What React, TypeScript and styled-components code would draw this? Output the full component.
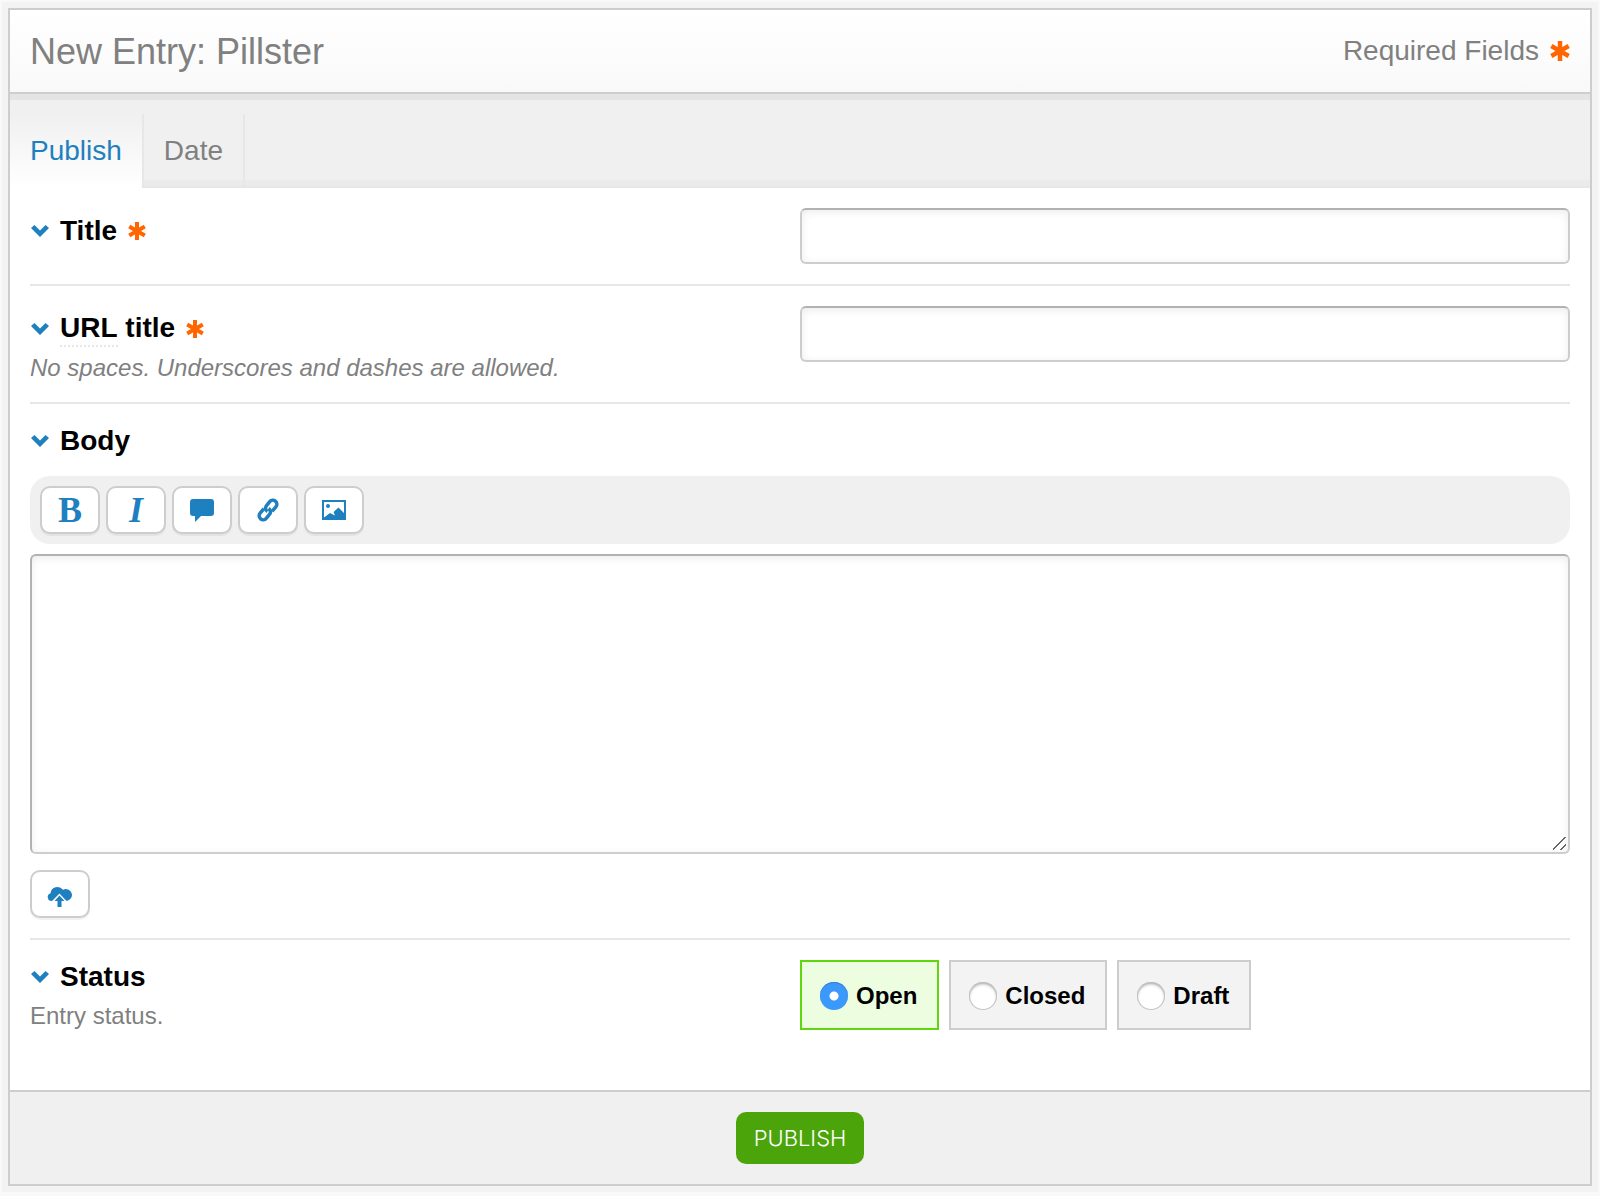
import React, { useId, useState } from "react";
import styled, { createGlobalStyle } from "styled-components";

const BLUE = "#1f80bf";
const ORANGE = "#ff6600";

const GlobalStyle = createGlobalStyle`
  *, *::before, *::after { box-sizing: border-box; }
  body {
    margin: 0;
    background: #f9f9f9;
    color: #000;
    font-family: "Liberation Sans", Arial, Helvetica, sans-serif;
    font-size: 28px;
    line-height: 34px;
  }
`;

const Panel = styled.form`
  margin: 8px 8px 10px;
  border: 2px solid #cdcdcd;
  background: #fff;
  box-shadow: 0 0 0 6px #f3f3f3;
`;

const Header = styled.header`
  display: flex;
  align-items: center;
  justify-content: space-between;
  height: 84px;
  padding: 0 20px;
  border-bottom: 2px solid #cdcdcd;
  background: linear-gradient(to bottom, #fff, #f9f9f9);
  color: #808080;
`;

const Heading = styled.h1`
  margin: 0;
  padding-top: 2px;
  font-size: 36px;
  line-height: 44px;
  font-weight: 400;
`;

const RequiredNote = styled.p`
  display: flex;
  align-items: center;
  gap: 11px;
  margin: 0;
`;

const TabBar = styled.div`
  display: flex;
  padding-top: 14px;
  border-top: 6px solid #e4e4e4;
  background: linear-gradient(#f0f0f0, #f0f0f0) top / 100% calc(100% - 8px) no-repeat,
    linear-gradient(#e7e7e7, #e7e7e7) bottom / 100% 2px no-repeat, #ebebeb;
  background-clip: padding-box;
`;

const Tab = styled.button<{ $active: boolean }>`
  height: 74px;
  padding: 0 20px;
  border: 0;
  border-right: 2px solid #e7e7e7;
  background: ${(p) => (p.$active ? "linear-gradient(to bottom, #f0f0f0, #fff)" : "transparent")};
  color: ${(p) => (p.$active ? BLUE : "#808080")};
  font: inherit;
  cursor: pointer;
`;

const Fields = styled.div`
  padding: 0 20px 40px;
`;

const Row = styled.section`
  padding: 20px 0;
  border-bottom: 2px solid #e7e7e7;
  &:last-child { border-bottom: 0; }
`;

const SplitRow = styled(Row)`
  display: grid;
  grid-template-columns: 1fr 1fr;
  align-items: start;
`;

const FieldName = styled.div<{ $required?: boolean }>`
  display: flex;
  align-items: center;
  height: 34px;
  margin-top: ${(p) => (p.$required ? 6 : 0)}px;
  font-weight: 700;
`;

const Toggle = styled.button`
  display: flex;
  flex: none;
  width: 30px;
  padding: 0 0 0 1px;
  border: 0;
  background: none;
  cursor: pointer;
`;

const NameLabel = styled.label`
  margin-right: 11px;
`;

const Abbr = styled.abbr`
  display: inline-block;
  border-bottom: 2px dotted #e7e7e7;
  text-decoration: none;
`;

const Hint = styled.p<{ $italic?: boolean }>`
  margin: 8px 0 0;
  color: #808080;
  font-size: 24px;
  line-height: 28px;
  font-style: ${(p) => (p.$italic ? "italic" : "normal")};
`;

const fieldBox = `
  display: block;
  width: 100%;
  border: 2px solid #cdcdcd;
  border-top-color: #b2b2b2;
  border-radius: 6px;
  background: #fff;
  box-shadow: inset 0 2px 8px rgba(0, 0, 0, 0.08);
  font: inherit;
  outline: 0;
`;

const TextInput = styled.input`
  ${fieldBox}
  height: 56px;
  padding: 0 10px;
`;

const TextArea = styled.textarea`
  ${fieldBox}
  height: 300px;
  margin: 10px 0 16px;
  padding: 10px;
  border-left-color: #b2b2b2;
  resize: vertical;
  &::-webkit-resizer {
    background: linear-gradient(135deg, transparent 44%, #666 45%, #666 52%, transparent 53%, transparent 74%, #666 75%, #666 82%, transparent 83%) 0 0 / 13px 13px no-repeat;
  }
`;

const Toolbar = styled.div`
  display: flex;
  gap: 6px;
  margin-top: 18px;
  padding: 10px;
  border-radius: 20px;
  background: #f0f0f0;
`;

const ToolButton = styled.button`
  display: flex;
  align-items: center;
  justify-content: center;
  width: 60px;
  height: 48px;
  padding: 0;
  border: 2px solid #cdcdcd;
  border-radius: 10px;
  background: #fff;
  box-shadow: 0 2px 0 rgba(0, 0, 0, 0.05);
  color: ${BLUE};
  cursor: pointer;
`;

const Letter = styled.span<{ $italic?: boolean }>`
  font-family: "Liberation Serif", "Times New Roman", serif;
  font-size: 36px;
  line-height: 40px;
  font-weight: 700;
  font-style: ${(p) => (p.$italic ? "italic" : "normal")};
`;

const Choices = styled.div`
  display: flex;
  gap: 10px;
`;

const Choice = styled.label<{ $checked: boolean }>`
  display: flex;
  align-items: center;
  gap: 8px;
  height: 70px;
  padding: 2px 20px 0 18px;
  border: 2px solid ${(p) => (p.$checked ? "#5fd60e" : "#cdcdcd")};
  background: ${(p) => (p.$checked ? "#ecfde0" : "#f3f3f3")};
  font-size: 24px;
  font-weight: 700;
  cursor: pointer;
`;

const Radio = styled.input`
  appearance: none;
  width: 28px;
  height: 28px;
  margin: 0;
  border-radius: 50%;
  background: #fff;
  box-shadow: inset 0 0 0 1px #c4c4c4, inset 0 2px 3px rgba(0, 0, 0, 0.35);
  &:checked {
    background: radial-gradient(circle, #fff 0 4px, #3b99fc 5px);
    box-shadow: inset 0 1px 1px #2f7fd6;
  }
`;

const Footer = styled.footer`
  display: flex;
  justify-content: center;
  padding: 20px;
  border-top: 2px solid #cdcdcd;
  background: #f0f0f0;
`;

const Submit = styled.button`
  height: 52px;
  padding: 0 18px;
  border: 0;
  border-radius: 10px;
  background: #4ba50a;
  color: #fff;
  font-family: Inter, Roboto, sans-serif;
  font-size: 22px;
  font-weight: 300;
  cursor: pointer;
`;

const Asterisk = ({ size = 18 }: { size?: number }) => (
  <svg width={size} height={size} viewBox="0 0 18 18" aria-label="required">
    <path d="M9 0v18M1.2 4.5l15.6 9M16.8 4.5l-15.6 9" stroke={ORANGE} strokeWidth="4" />
  </svg>
);

const Chevron = () => (
  <svg width="18" height="12" viewBox="0 0 18 12" aria-hidden="true">
    <path d="M3.500 0L9 5.500 14.500 0 18 3 9 12 0 3z" fill={BLUE} />
  </svg>
);

const QuoteIcon = () => (
  <svg width="24" height="23" viewBox="0 0 24 23" fill="currentColor" aria-hidden="true">
    <path d="M3 0h18a3 3 0 0 1 3 3v11a3 3 0 0 1-3 3H11l-6 6v-6H3a3 3 0 0 1-3-3V3a3 3 0 0 1 3-3z" />
  </svg>
);

const LinkIcon = () => (
  <svg width="24" height="24" viewBox="-12 -12 24 24" fill="none" stroke="currentColor" strokeWidth="3.500" aria-hidden="true">
    <g transform="rotate(-50)">
      <path d="M-1.500 -4H-7.500a4 4 0 0 0 0 8h5a4 4 0 0 0 4 -4.500" />
      <path d="M1.500 4H7.500a4 4 0 0 0 0 -8h-5a4 4 0 0 0 -4 4.500" />
    </g>
  </svg>
);

const ImageIcon = () => (
  <svg width="24" height="20" viewBox="0 0 24 20" fill="currentColor" aria-hidden="true">
    <path fillRule="evenodd" d="M0 0h24v20H0zM2 2v15.500l6-4.500 5 2.500-1.500-3.500 5-4.500 5.500 5.500V2z" />
    <circle cx="6" cy="6" r="2" />
  </svg>
);

const UploadIcon = () => (
  <svg width="26" height="26" viewBox="0 0 26 26" fill="currentColor" aria-hidden="true">
    <path d="M5 20a4 4 0 0 1-1.500-7.800A7 7 0 0 1 16 8.800 6 6 0 1 1 19.500 20L12.500 12.500z" />
    <path d="M12.500 14.500l5 5.500h-3v6h-4v-6h-3z" />
  </svg>
);

type NameProps = { htmlFor?: string; required?: boolean; children: React.ReactNode };

const Name = ({ htmlFor, required, children }: NameProps) => (
  <FieldName $required={required}>
    <Toggle type="button" aria-label="Collapse field"><Chevron /></Toggle>
    <NameLabel htmlFor={htmlFor}>{children}</NameLabel>
    {required && <Asterisk />}
  </FieldName>
);

const TABS = ["Publish", "Date"];
const STATUSES = ["Open", "Closed", "Draft"];

export default function App() {
  const id = useId();
  const [tab, setTab] = useState("Publish");
  const [status, setStatus] = useState("Open");
  return (
    <>
      <GlobalStyle />
      <Panel onSubmit={(e) => e.preventDefault()}>
        <Header>
          <Heading>New Entry: Pillster</Heading>
          <RequiredNote>Required Fields <Asterisk size={20} /></RequiredNote>
        </Header>
        <TabBar role="tablist">
          {TABS.map((t) => (
            <Tab key={t} type="button" role="tab" aria-selected={t === tab} $active={t === tab} onClick={() => setTab(t)}>{t}</Tab>
          ))}
        </TabBar>
        <Fields>
          <SplitRow>
            <Name htmlFor={id + "title"} required>Title</Name>
            <TextInput id={id + "title"} type="text" />
          </SplitRow>
          <SplitRow>
            <div>
              <Name htmlFor={id + "url"} required><Abbr>URL</Abbr> title</Name>
              <Hint $italic>No spaces. Underscores and dashes are allowed.</Hint>
            </div>
            <TextInput id={id + "url"} type="text" />
          </SplitRow>
          <Row>
            <Name htmlFor={id + "body"}>Body</Name>
            <Toolbar>
              <ToolButton type="button" aria-label="Bold"><Letter>B</Letter></ToolButton>
              <ToolButton type="button" aria-label="Italic"><Letter $italic>I</Letter></ToolButton>
              <ToolButton type="button" aria-label="Quote"><QuoteIcon /></ToolButton>
              <ToolButton type="button" aria-label="Link"><LinkIcon /></ToolButton>
              <ToolButton type="button" aria-label="Image"><ImageIcon /></ToolButton>
            </Toolbar>
            <TextArea id={id + "body"} />
            <ToolButton type="button" aria-label="Upload"><UploadIcon /></ToolButton>
          </Row>
          <SplitRow>
            <div>
              <Name>Status</Name>
              <Hint>Entry status.</Hint>
            </div>
            <Choices role="radiogroup" aria-label="Status">
              {STATUSES.map((s) => (
                <Choice key={s} $checked={s === status}>
                  <Radio type="radio" name="status" checked={s === status} onChange={() => setStatus(s)} />
                  {s}
                </Choice>
              ))}
            </Choices>
          </SplitRow>
        </Fields>
        <Footer>
          <Submit type="submit">PUBLISH</Submit>
        </Footer>
      </Panel>
    </>
  );
}
